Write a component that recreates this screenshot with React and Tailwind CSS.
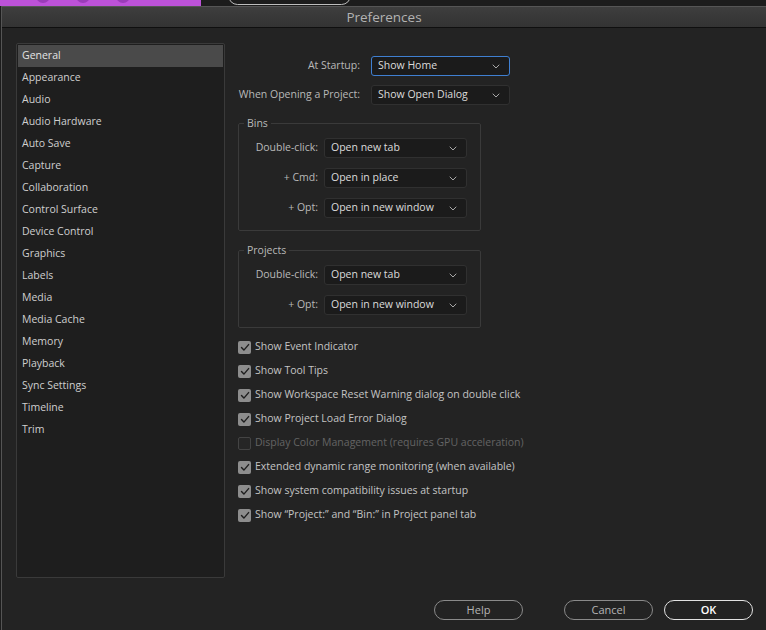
const font = { fontFamily: '"Open Sans", "Liberation Sans", sans-serif' };

const categories = [
  "General",
  "Appearance",
  "Audio",
  "Audio Hardware",
  "Auto Save",
  "Capture",
  "Collaboration",
  "Control Surface",
  "Device Control",
  "Graphics",
  "Labels",
  "Media",
  "Media Cache",
  "Memory",
  "Playback",
  "Sync Settings",
  "Timeline",
  "Trim",
];

const checks = [
  { label: "Show Event Indicator", on: true },
  { label: "Show Tool Tips", on: true },
  { label: "Show Workspace Reset Warning dialog on double click", on: true },
  { label: "Show Project Load Error Dialog", on: true },
  { label: "Display Color Management (requires GPU acceleration)", on: false, disabled: true },
  { label: "Extended dynamic range monitoring (when available)", on: true },
  { label: "Show system compatibility issues at startup", on: true },
  { label: "Show \u201cProject:\u201d and \u201cBin:\u201d in Project panel tab", on: true },
];

function Chevron() {
  return (
    <svg width="8" height="5" viewBox="0 0 8 5" fill="none">
      <path d="M1 1l3 3 3-3" stroke="#a8a8a8" strokeWidth="1" strokeLinecap="round" strokeLinejoin="round" />
    </svg>
  );
}

function Select({ value, width, focused }) {
  return (
    <div
      className={`flex h-[20px] items-center justify-between rounded-[3px] border bg-[#1b1b1b] pl-[6px] pr-[9px] text-[10.5px] whitespace-nowrap text-[#dcdcdc] ${
        focused ? "border-[#3f7fd1]" : "border-[#303030]"
      }`}
      style={{ width }}
    >
      <span>{value}</span>
      <Chevron />
    </div>
  );
}

function Group({ title, rows }) {
  return (
    <fieldset className="w-[243px] rounded-[2px] border border-[#3a3a3a] pb-[12px] pl-[14px] pr-[13px]">
      <legend className="ml-[-9px] px-[3px] text-[10.5px] leading-[15px] text-[#b9b9b9]">{title}</legend>
      <div className="mt-[7px] flex flex-col gap-[10px]">
        {rows.map(([label, value]) => (
          <div key={label} className="flex items-center">
            <span className="w-[65px] whitespace-nowrap text-right text-[10.5px] text-[#b9b9b9]">{label}</span>
            <div className="ml-[6px]">
              <Select value={value} width={143} />
            </div>
          </div>
        ))}
      </div>
    </fieldset>
  );
}

function Check({ on }) {
  if (!on) {
    return <div className="h-[13px] w-[13px] rounded-[2px] border border-[#444] bg-[#262626]" />;
  }
  return (
    <div className="flex h-[13px] w-[13px] items-center justify-center rounded-[2px] bg-[#8d8d8d]">
      <svg width="10" height="9" viewBox="0 0 10 9" fill="none">
        <path d="M1.5 4.6l2.4 2.5L8.6 1.6" stroke="#1e1e1e" strokeWidth="1.4" strokeLinecap="round" strokeLinejoin="round" />
      </svg>
    </div>
  );
}

function Button({ children, primary, className = "" }) {
  return (
    <button
      className={`h-[20px] w-[89px] rounded-full border text-[11px] ${
        primary ? "border-[#e2e2e2] font-semibold text-white" : "border-[#8a8a8a] text-[#b5b5b5]"
      } ${className}`}
    >
      {children}
    </button>
  );
}

export default function App() {
  return (
    <div className="flex h-[630px] w-[766px] flex-col overflow-hidden bg-[#1c1c1c]" style={font}>
      {/* window behind the dialog */}
      <div className="flex h-[6px] shrink-0">
        <div className="relative h-full w-[201px] bg-[#bd52d9]">
          <div className="absolute left-[36px] top-[-4px] flex gap-[26px]">
            <div className="h-[7px] w-[14px] rounded-b-full bg-[#9a3cb8]" />
            <div className="h-[7px] w-[14px] rounded-b-full bg-[#9a3cb8]" />
            <div className="h-[7px] w-[14px] rounded-b-full bg-[#9a3cb8]" />
          </div>
        </div>
        <div className="ml-[27px] mt-[-14px] h-[19px] w-[123px] rounded-full border border-[#bdbdbd]" />
      </div>

      {/* dialog */}
      <div className="ml-px flex flex-1 flex-col border-l border-t border-[#555] bg-[#232323]">
        <div className="flex h-[21px] shrink-0 items-center justify-center border-b border-[#0f0f0f] bg-gradient-to-b from-[#3e3e3e] to-[#333333] text-[13.5px] text-[#b3b3b3]">
          Preferences
        </div>

        <div className="flex pl-[14px] pt-[15px]">
          <div className="h-[535px] w-[209px] shrink-0 rounded-[2px] border border-[#3a3a3a] bg-[#1e1e1e] px-px pt-px">
            {categories.map((c, i) => (
              <div
                key={c}
                className={`flex h-[22px] items-center pl-[4px] text-[10.5px] ${
                  i === 0 ? "bg-[#4a4a4a] text-[#e4e4e4]" : "text-[#cfcfcf]"
                }`}
              >
                {c}
              </div>
            ))}
          </div>

          <div className="ml-[13px] flex flex-col pt-[13px]">
            <div className="flex flex-col gap-[9px]">
              <div className="flex items-center">
                <span className="w-[122px] whitespace-nowrap text-right text-[10.5px] text-[#b9b9b9]">At Startup:</span>
                <div className="ml-[11px]">
                  <Select value="Show Home" width={139} focused />
                </div>
              </div>
              <div className="flex items-center">
                <span className="w-[122px] whitespace-nowrap text-right text-[10.5px] text-[#b9b9b9]">When Opening a Project:</span>
                <div className="ml-[11px]">
                  <Select value="Show Open Dialog" width={139} />
                </div>
              </div>
            </div>

            <div className="mt-[11px]">
              <Group
                title="Bins"
                rows={[
                  ["Double-click:", "Open new tab"],
                  ["+ Cmd:", "Open in place"],
                  ["+ Opt:", "Open in new window"],
                ]}
              />
            </div>
            <div className="mt-[12px]">
              <Group
                title="Projects"
                rows={[
                  ["Double-click:", "Open new tab"],
                  ["+ Opt:", "Open in new window"],
                ]}
              />
            </div>

            <div className="mt-[7px] flex flex-col">
              {checks.map((c) => (
                <div key={c.label} className="flex h-[24px] items-center gap-[4px]">
                  <Check on={c.on} />
                  <span className={`whitespace-nowrap text-[10.5px] ${c.disabled ? "text-[#646464]" : "text-[#c4c4c4]"}`}>
                    {c.label}
                  </span>
                </div>
              ))}
            </div>
          </div>
        </div>

        <div className="mt-[22px] flex items-center justify-end pr-[13px]">
          <Button>Help</Button>
          <Button className="ml-[41px]">Cancel</Button>
          <Button primary className="ml-[11px]">
            OK
          </Button>
        </div>
      </div>
    </div>
  );
}
